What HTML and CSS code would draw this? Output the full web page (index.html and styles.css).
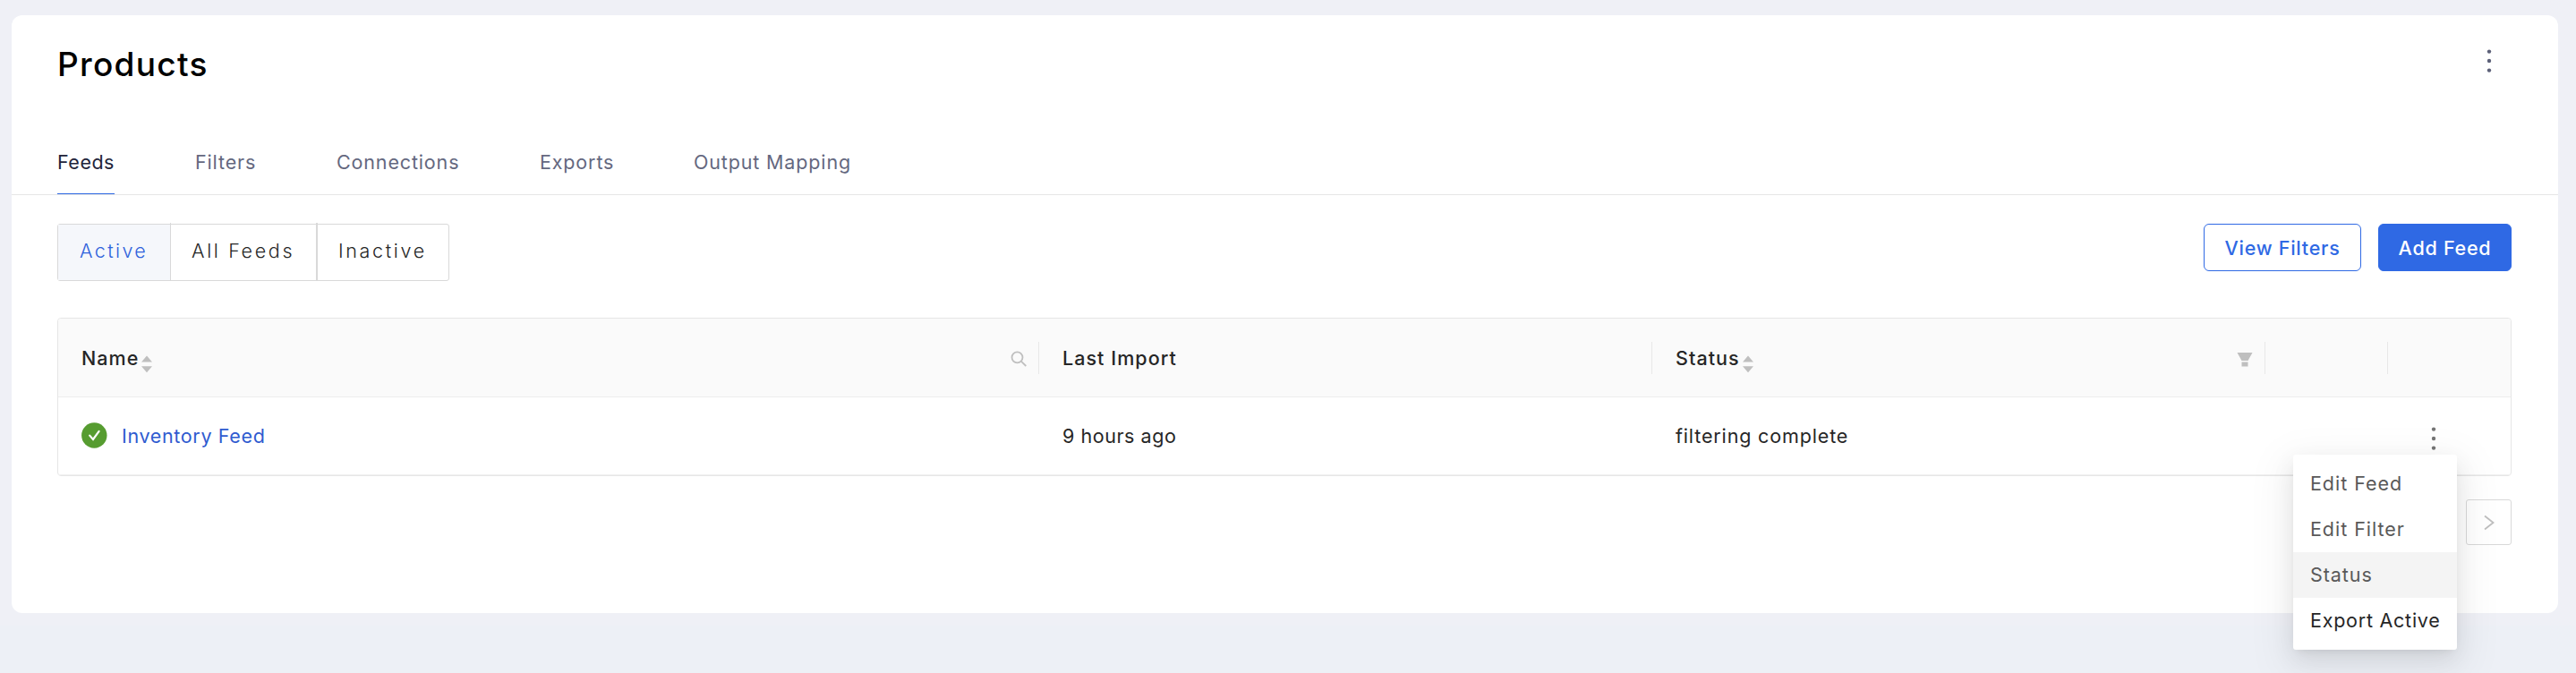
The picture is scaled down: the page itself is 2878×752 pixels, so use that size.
FILE: index.html
```html
<!DOCTYPE html>
<html lang="en">
<head>
    <meta charset="UTF-8">
    <meta name="viewport" content="width=device-width, initial-scale=1.0">
    <title>Products</title>
    <link rel="stylesheet" href="styles.css">
</head>
<body>
    <div class="card">
        <div class="card-header">
            <h1>Products</h1>
            <svg class="more" width="6" height="28" viewBox="0 0 6 28">
                <circle cx="3" cy="3.6" r="2.2"/>
                <circle cx="3" cy="14" r="2.2"/>
                <circle cx="3" cy="24.6" r="2.2"/>
            </svg>
        </div>

        <nav class="tabs">
            <div><a class="tab active">Feeds</a></div>
            <div><a class="tab">Filters</a></div>
            <div><a class="tab">Connections</a></div>
            <div><a class="tab">Exports</a></div>
            <div><a class="tab">Output Mapping</a></div>
        </nav>

        <div class="content">
            <div class="toolbar">
                <div class="segments">
                    <div class="segment selected">Active</div>
                    <div class="segment">All Feeds</div>
                    <div class="segment">Inactive</div>
                </div>
                <div class="buttons">
                    <button class="btn btn-view">View Filters</button>
                    <button class="btn btn-add">Add Feed</button>
                </div>
            </div>

            <div class="table">
                <div class="row head">
                    <div class="cell">
                        <span>Name</span>
                        <svg class="sorter" width="12" height="20" viewBox="0 0 12 20">
                            <path d="M6 .5 12 7.5H0zM0 12.3h12L6 19.3z"/>
                        </svg>
                        <svg class="cell-icon search" width="18" height="18" viewBox="0 0 18 18">
                            <circle cx="7.5" cy="7.3" r="6"/>
                            <path d="M11.8 11.6 17.3 17"/>
                        </svg>
                        <i class="divider"></i>
                    </div>
                    <div class="cell">
                        <span>Last Import</span>
                        <i class="divider"></i>
                    </div>
                    <div class="cell">
                        <span>Status</span>
                        <svg class="sorter" width="12" height="20" viewBox="0 0 12 20">
                            <path d="M6 .5 12 7.5H0zM0 12.3h12L6 19.3z"/>
                        </svg>
                        <svg class="cell-icon" width="18" height="18" viewBox="0 0 18 18">
                            <path d="M.5 2h17l-5 9h-7zM5.5 12.5h7v5h-7z"/>
                        </svg>
                        <i class="divider"></i>
                    </div>
                    <div class="cell"><i class="divider"></i></div>
                    <div class="cell"></div>
                </div>
                <div class="row">
                    <div class="cell">
                        <svg class="check" width="29" height="29" viewBox="0 0 29 29">
                            <circle cx="14.3" cy="14.5" r="14.2"/>
                            <path d="M9.2 14.6 13 19 19.6 9.8"/>
                        </svg>
                        <a class="feed-link">Inventory Feed</a>
                    </div>
                    <div class="cell hours">9 hours ago</div>
                    <div class="cell">filtering complete</div>
                    <div class="cell"></div>
                    <div class="cell actions">
                        <svg class="row-more" width="6" height="28" viewBox="0 0 6 28">
                            <circle cx="3" cy="3.6" r="2.2"/>
                            <circle cx="3" cy="14" r="2.2"/>
                            <circle cx="3" cy="24.6" r="2.2"/>
                        </svg>
                        <div class="menu">
                            <div class="menu-item">Edit Feed</div>
                            <div class="menu-item">Edit Filter</div>
                            <div class="menu-item hover">Status</div>
                            <div class="menu-item last">Export Active</div>
                        </div>
                    </div>
                </div>
            </div>

            <div class="pagination">
                <div class="page-next">
                    <svg width="12" height="18" viewBox="0 0 12 18">
                        <path d="M1 1.5 10.5 9 1 16.5"/>
                    </svg>
                </div>
            </div>
        </div>
    </div>
</body>
</html>
```
FILE: styles.css
```css
* {
    box-sizing: border-box;
}
body {
    margin: 0;
    padding: 17px 20px 0 13px;
    height: 752px;
    overflow: hidden;
    background: linear-gradient(#eff0f6 699px, #edf0f6 699px);
    font-family: Inter, "Liberation Sans", sans-serif;
    font-size: 21.5px;
    letter-spacing: 0.85px;
    color: #262626;
}
svg {
    display: block;
    flex: none;
}
.card {
    height: 668px;
    background: #fff;
    border-radius: 12px;
}
.card-header {
    display: flex;
    justify-content: space-between;
    padding: 30px 74px 0 51px;
}
h1 {
    margin: 0;
    font-size: 37px;
    line-height: 50px;
    height: 48px;
    font-weight: 500;
    letter-spacing: 1.3px;
    color: #000;
}
.more {
    margin-top: 7px;
    fill: #5c6078;
}

/* tabs */
.tabs {
    display: grid;
    grid-template-columns: 154px 158px 227px 172px 1fr;
    margin-top: 69px;
    padding-left: 51px;
    border-bottom: 1px solid #e6e6e6;
}
.tab {
    display: inline-block;
    vertical-align: top;
    line-height: 34px;
    padding-bottom: 18px;
    border-bottom: 1px solid transparent;
    color: #64687f;
}
.tab.active {
    width: 64px;
    color: #22243a;
    letter-spacing: 0.5px;
    border-bottom-color: #2f69e4;
}

.content {
    padding: 32px 52px 0 51px;
}
.toolbar {
    display: flex;
    justify-content: space-between;
    align-items: flex-start;
}
.segments {
    display: flex;
    height: 64px;
    border: 1px solid #d9d9d9;
    border-radius: 3px;
}
.segment {
    width: 147px;
    padding-left: 25px;
    line-height: 58px;
    font-weight: 300;
    letter-spacing: 2.65px;
    white-space: nowrap;
}
.segment + .segment {
    width: 163px;
    margin-top: -2px;
    padding-left: 23px;
    padding-top: 2px;
    border-left: 1px solid #d9d9d9;
}
.segment:first-child {
    width: 125px;
    padding-left: 24px;
    letter-spacing: 2.4px;
}
.segment:last-child {
    width: 148px;
    border-left-width: 2px;
}
.segment.selected {
    background: #f5f7fb;
    color: #2f62dc;
}
.buttons {
    display: flex;
    gap: 19px;
}
.btn {
    height: 53px;
    padding: 0;
    border: 1px solid #2f69e4;
    border-radius: 6px;
    font: inherit;
    font-weight: 500;
    letter-spacing: 0.75px;
}
.btn-view {
    width: 176px;
    background: #fff;
    color: #2f69e4;
}
.btn-add {
    width: 149px;
    background: #2f69e4;
    color: #fff;
}

/* feeds table */
.table {
    margin-top: 41px;
    border: 1px solid #e6e6e6;
    border-radius: 4px;
}
.row {
    display: grid;
    grid-template-columns: 1096px 685px 685px 137px 1fr;
    height: 87px;
    padding-bottom: 1px;
    border-bottom: 1px solid #f0f0f0;
}
.row.head {
    height: 88px;
    padding-bottom: 0;
    background: #fafafa;
    border-bottom-color: #ededed;
    border-radius: 4px 4px 0 0;
    font-weight: 500;
    letter-spacing: 1.05px;
}
.cell {
    display: flex;
    align-items: center;
    padding-left: 26px;
}
.sorter {
    margin: 14px 0 0 3px;
    fill: #bfbfbf;
}
.cell-icon {
    margin: 2px 13px 0 auto;
    fill: #bfbfbf;
}
.search {
    fill: none;
    stroke: #bfbfbf;
    stroke-width: 1.8;
}
.divider {
    width: 1px;
    height: 36px;
    margin-left: auto;
    background: #e8e8e8;
}
.cell-icon + .divider {
    margin-left: 0;
}
.check {
    margin-right: 16px;
    fill: #569c30;
}
.check path {
    fill: none;
    stroke: #fff;
    stroke-width: 2.2;
    stroke-linecap: round;
}
.feed-link {
    color: #2f5bd0;
    letter-spacing: 0.65px;
}
.hours {
    letter-spacing: 0.55px;
}
.actions {
    position: relative;
    padding-left: 48px;
}
.row-more {
    margin-top: 7px;
    fill: #757575;
}

/* row dropdown */
.menu {
    position: absolute;
    top: 64px;
    left: -106px;
    width: 183px;
    height: 218px;
    padding-top: 7px;
    background: #fff;
    border-radius: 3px;
    box-shadow: 0 5px 10px -6px rgba(0,0,0,0.12), 0 10px 26px rgba(0,0,0,0.08), 0 14px 45px 13px rgba(0,0,0,0.05);
}
.menu-item {
    padding-left: 19px;
    line-height: 51px;
    color: #595959;
    letter-spacing: 0.95px;
}
.menu-item.hover {
    background: #f4f4f4;
}
.menu-item.last {
    color: #262626;
    letter-spacing: 0.75px;
}

.pagination {
    display: flex;
    justify-content: flex-end;
    margin-top: 26px;
}
.page-next {
    display: flex;
    align-items: center;
    justify-content: center;
    width: 51px;
    height: 51px;
    border: 1px solid #d9d9d9;
    border-radius: 3px;
}
.page-next path {
    fill: none;
    stroke: #bfbfbf;
    stroke-width: 1.8;
}
```
